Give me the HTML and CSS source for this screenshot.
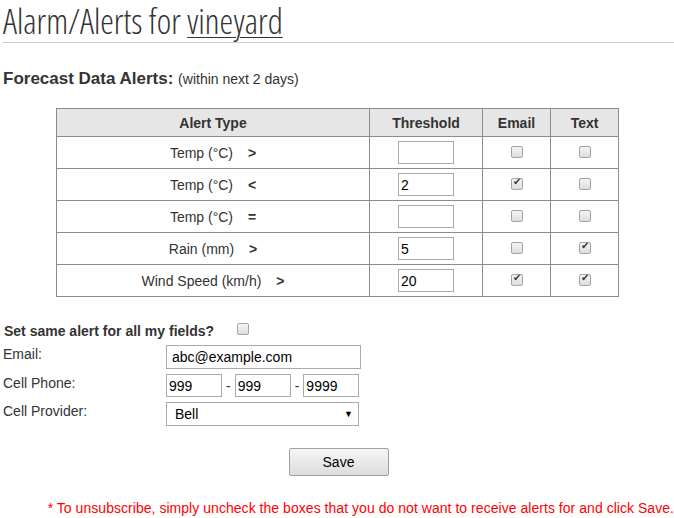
FILE: index.html
```html
<!DOCTYPE html>
<html lang="en">
<head>
    <meta charset="UTF-8">
    <title>Alarm/Alerts for vineyard</title>
    <link rel="stylesheet" href="styles.css">
</head>
<body>
    <div class="page">
        <h1 class="title">Alarm/Alerts for <a href="#">vineyard</a></h1>

        <h2 class="section">Forecast Data Alerts: <span>(within next 2 days)</span></h2>

        <table class="alerts">
            <thead>
                <tr>
                    <th class="c-type">Alert Type</th>
                    <th class="c-th">Threshold</th>
                    <th class="c-chk">Email</th>
                    <th class="c-chk">Text</th>
                </tr>
            </thead>
            <tbody>
                <tr>
                    <td>Temp (&deg;C) <b>&gt;</b></td>
                    <td><input type="text" class="num" value=""></td>
                    <td><span class="chk"></span></td>
                    <td><span class="chk"></span></td>
                </tr>
                <tr>
                    <td>Temp (&deg;C) <b>&lt;</b></td>
                    <td><input type="text" class="num" value="2"></td>
                    <td><span class="chk on"></span></td>
                    <td><span class="chk"></span></td>
                </tr>
                <tr>
                    <td>Temp (&deg;C) <b>=</b></td>
                    <td><input type="text" class="num" value=""></td>
                    <td><span class="chk"></span></td>
                    <td><span class="chk"></span></td>
                </tr>
                <tr>
                    <td>Rain (mm) <b>&gt;</b></td>
                    <td><input type="text" class="num" value="5"></td>
                    <td><span class="chk"></span></td>
                    <td><span class="chk on"></span></td>
                </tr>
                <tr>
                    <td>Wind Speed (km/h) <b>&gt;</b></td>
                    <td><input type="text" class="num" value="20"></td>
                    <td><span class="chk on"></span></td>
                    <td><span class="chk on"></span></td>
                </tr>
            </tbody>
        </table>

        <div class="same">
            <span>Set same alert for all my fields?</span>
            <span class="chk"></span>
        </div>

        <div class="form">
            <label>Email:</label>
            <input type="text" class="email" value="abc@example.com">

            <label>Cell Phone:</label>
            <div class="phone">
                <input type="text" value="999">
                <span>-</span>
                <input type="text" value="999">
                <span>-</span>
                <input type="text" value="9999">
            </div>

            <label>Cell Provider:</label>
            <div class="select">Bell <i>&#9660;</i></div>
        </div>

        <div class="actions">
            <button class="save">Save</button>
        </div>

        <p class="note">* To unsubscribe, simply uncheck the boxes that you do not want to receive alerts for and click Save.</p>
    </div>
</body>
</html>
```

FILE: styles.css
```css
*{
    padding: 0;
    margin: 0;
    box-sizing: border-box;
}
body{
    font-family: "Liberation Sans", Arial, sans-serif;
    font-size: 14px;
    color: #333;
    background: #fff;
}
.page{
    width: 674px;
    padding-left: 3px;
}
.title{
    font-family: "Open Sans", sans-serif;
    font-weight: 300;
    font-stretch: condensed;
    font-size: 34.5px;
    line-height: 41px;
    padding-bottom: 1px;
    color: #333;
    border-bottom: 1px solid #ccc;
}
.title a{
    color: #333;
    text-decoration: underline;
    text-underline-offset: 3px;
    text-decoration-thickness: 1px;
}
.section{
    font-size: 17px;
    font-weight: bold;
    margin: 26px 0 0 0;
    line-height: 20px;
}
.section span{
    font-size: 14px;
    font-weight: normal;
}
.alerts{
    border-collapse: collapse;
    margin: 19px 0 0 53px;
    width: 563px;
}
.alerts th,
.alerts td{
    border: 1px solid #8c8c8c;
    text-align: center;
}
.alerts th{
    background: #e6e6e6;
    height: 28px;
    font-size: 14px;
}
.alerts td{
    height: 32px;
}
.alerts td b{
    margin-left: 11px;
}
.c-type{ width: 313px; }
.c-th{ width: 113px; }
.c-chk{ width: 68px; }
input{
    font-family: "Liberation Sans", Arial, sans-serif;
    font-size: 14px;
    color: #000;
    border: 1px solid #aaa;
    padding: 0 2px;
    outline: none;
}
.num{
    width: 56px;
    height: 23px;
    display: block;
    margin: 0 auto;
}
.chk{
    display: inline-block;
    width: 12px;
    height: 12px;
    border: 1px solid #a5a5a5;
    border-radius: 2px;
    background: linear-gradient(#f4f4f4, #dedede);
    vertical-align: middle;
    position: relative;
    top: -2px;
}
.chk.on::after{
    content: "\2714";
    position: absolute;
    left: 1px;
    top: -3px;
    font-size: 10px;
    color: #333;
}
.same{
    margin-top: 26px;
    font-weight: bold;
    display: flex;
    align-items: center;
    gap: 23px;
    padding-left: 1px;
}
.form{
    display: grid;
    grid-template-columns: 163px auto;
    row-gap: 5px;
    margin-top: 6px;
    justify-content: start;
}
.form label{
    padding-top: 1px;
}
.email{
    width: 195px;
    height: 24px;
    padding: 0 5px;
}
.phone{
    display: flex;
    align-items: center;
    gap: 4px;
}
.phone input{
    width: 56px;
    height: 23px;
}
.select{
    width: 193px;
    height: 24px;
    border: 1px solid #aaa;
    color: #000;
    display: flex;
    align-items: center;
    justify-content: space-between;
    padding: 0 5px 0 8px;
}
.select i{
    font-style: normal;
    font-size: 9px;
}
.actions{
    text-align: center;
    margin-top: 22px;
}
.save{
    width: 100px;
    height: 28px;
    border: 1px solid #a0a0a0;
    border-radius: 2px;
    background: linear-gradient(#f6f6f6, #dcdcdc);
    font-family: "Liberation Sans", Arial, sans-serif;
    font-size: 14px;
    color: #000;
}
.note{
    color: #f00;
    text-align: right;
    margin-top: 24px;
    letter-spacing: 0.04px;
}
```
